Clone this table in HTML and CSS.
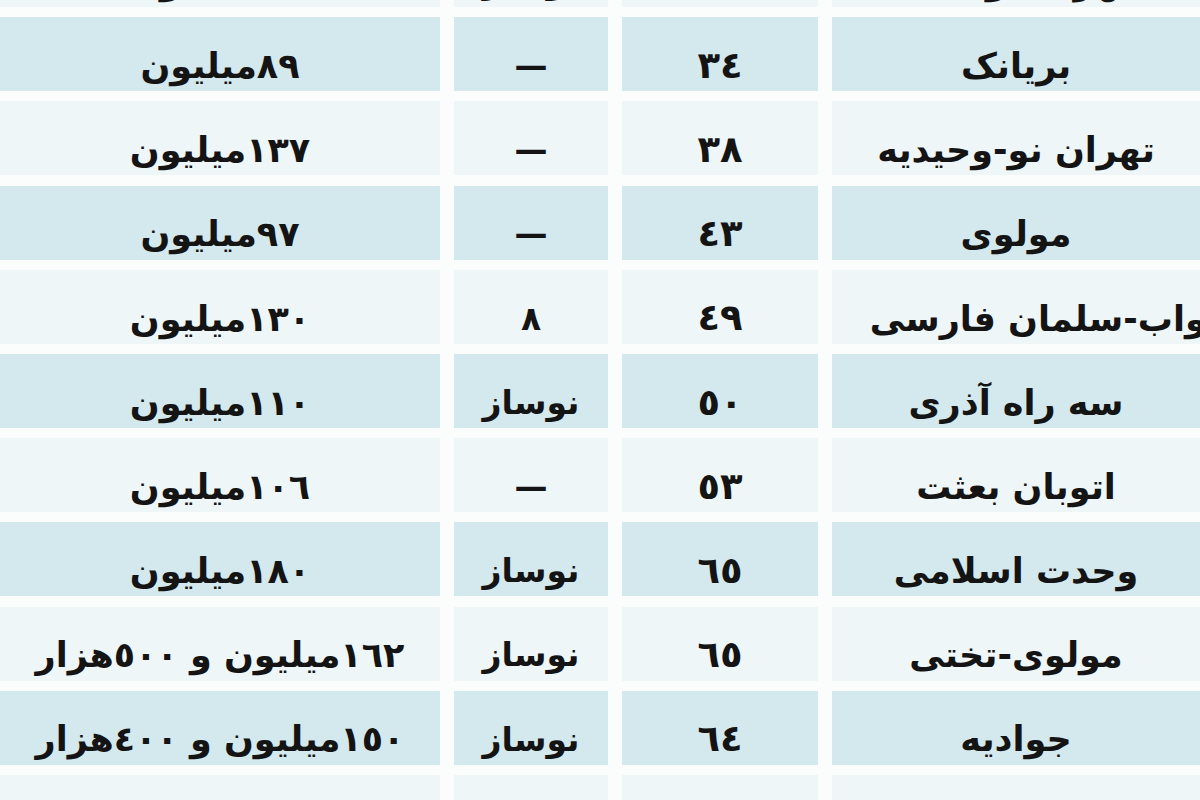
FILE: index.html
```html
<!DOCTYPE html>
<html lang="fa" dir="rtl">
<head>
<meta charset="utf-8">
<title>قیمت آپارتمان</title>
<link rel="stylesheet" href="styles.css">
</head>
<body>
<div class="table">
  <div class="row light"><div class="cell name">شهرک دولت‌آباد</div><div class="cell age">٣٠</div><div class="cell status">نوساز</div><div class="cell price">١٠٠میلیون</div></div>
  <div class="row blue"><div class="cell name">بریانک</div><div class="cell age">٣٤</div><div class="cell status">—</div><div class="cell price">٨٩میلیون</div></div>
  <div class="row light"><div class="cell name">تهران نو-وحیدیه</div><div class="cell age">٣٨</div><div class="cell status">—</div><div class="cell price">١٣٧میلیون</div></div>
  <div class="row blue"><div class="cell name">مولوی</div><div class="cell age">٤٣</div><div class="cell status">—</div><div class="cell price">٩٧میلیون</div></div>
  <div class="row light"><div class="cell name wide">نواب-سلمان فارسی</div><div class="cell age">٤٩</div><div class="cell status">٨</div><div class="cell price">١٣٠میلیون</div></div>
  <div class="row blue"><div class="cell name">سه راه آذری</div><div class="cell age">٥٠</div><div class="cell status">نوساز</div><div class="cell price">١١٠میلیون</div></div>
  <div class="row light"><div class="cell name">اتوبان بعثت</div><div class="cell age">٥٣</div><div class="cell status">—</div><div class="cell price">١٠٦میلیون</div></div>
  <div class="row blue"><div class="cell name">وحدت اسلامی</div><div class="cell age">٦٥</div><div class="cell status">نوساز</div><div class="cell price">١٨٠میلیون</div></div>
  <div class="row light"><div class="cell name">مولوی-تختی</div><div class="cell age">٦٥</div><div class="cell status">نوساز</div><div class="cell price">١٦٢میلیون و ٥٠٠هزار</div></div>
  <div class="row blue"><div class="cell name">جوادیه</div><div class="cell age">٦٤</div><div class="cell status">نوساز</div><div class="cell price">١٥٠میلیون و ٤٠٠هزار</div></div>
  <div class="row light"><div class="cell name">خزانه</div><div class="cell age">٦٧</div><div class="cell status">نوساز</div><div class="cell price">١٤٠میلیون</div></div>
</div>
</body>
</html>
```
FILE: styles.css
```css
html, body {
  margin: 0;
  padding: 0;
  background: #fbfdfd;
  overflow: hidden;
}
body {
  width: 1200px;
  height: 800px;
  font-family: "DejaVu Sans", sans-serif;
  color: #141414;
}
.table {
  direction: rtl;
  display: flex;
  flex-direction: column;
  row-gap: 10.2px;
  margin-top: -67px;
}
.row {
  display: grid;
  grid-template-columns: 368px 196px 154px 440px;
  column-gap: 14px;
  height: 74px;
}
.cell {
  display: flex;
  align-items: center;
  justify-content: center;
  font-size: 35px;
  font-weight: bold;
  white-space: nowrap;
  padding-top: 24px;
  box-sizing: border-box;
  line-height: 1.1;
}
.blue .cell { background: #d3e9ed; }
.light .cell { background: #eef6f8; }
.wide { justify-content: flex-start; margin-right: -20px; }
.age { font-size: 37px; }
.status { font-size: 33px; }
```
